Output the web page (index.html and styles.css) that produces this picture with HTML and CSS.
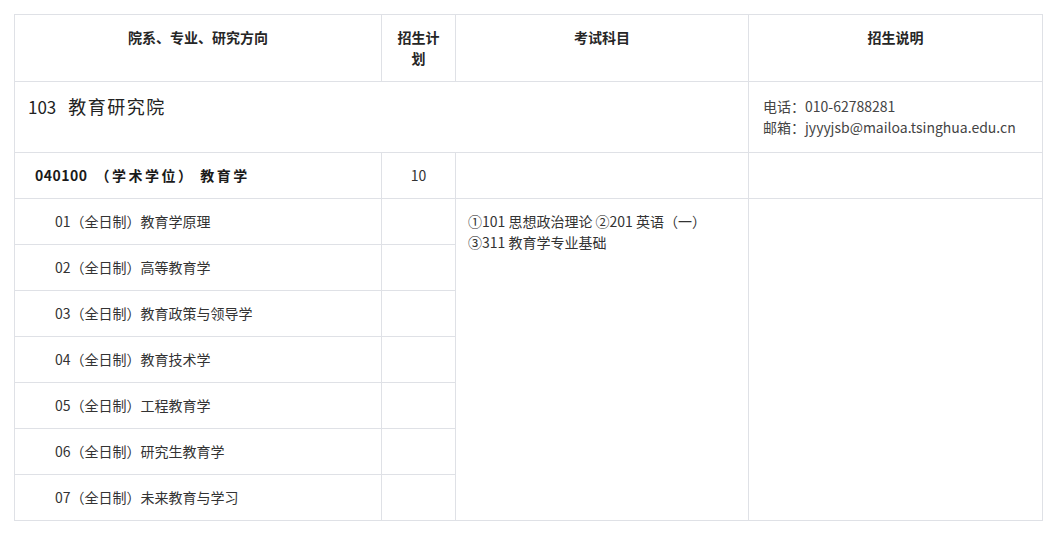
FILE: index.html
```html
<!DOCTYPE html>
<html lang="zh-CN">
<head>
<meta charset="utf-8">
<title>招生目录</title>
<link rel="stylesheet" href="styles.css">
</head>
<body>
<div class="page">
<table class="catalog">
  <colgroup>
    <col class="c1"><col class="c2"><col class="c3"><col class="c4">
  </colgroup>
  <thead>
    <tr class="head-row">
      <th>院系、专业、研究方向</th>
      <th>招生计划</th>
      <th>考试科目</th>
      <th>招生说明</th>
    </tr>
  </thead>
  <tbody>
    <tr class="dept-row">
      <td colspan="3" class="dept-name"><span class="num">103</span>教育研究院</td>
      <td class="contact">电话：010-62788281<br>邮箱：jyyyjsb@mailoa.tsinghua.edu.cn</td>
    </tr>
    <tr class="major-row">
      <td class="major-name"><span class="code">040100</span>（学术学位） 教育学</td>
      <td class="plan">10</td>
      <td></td>
      <td></td>
    </tr>
    <tr class="dir-row">
      <td class="dir">01（全日制）教育学原理</td>
      <td></td>
      <td rowspan="7" class="exam">①101 思想政治理论 ②201 英语（一）<br>③311 教育学专业基础</td>
      <td rowspan="7"></td>
    </tr>
    <tr class="dir-row"><td class="dir">02（全日制）高等教育学</td><td></td></tr>
    <tr class="dir-row"><td class="dir">03（全日制）教育政策与领导学</td><td></td></tr>
    <tr class="dir-row"><td class="dir">04（全日制）教育技术学</td><td></td></tr>
    <tr class="dir-row"><td class="dir">05（全日制）工程教育学</td><td></td></tr>
    <tr class="dir-row"><td class="dir">06（全日制）研究生教育学</td><td></td></tr>
    <tr class="dir-row"><td class="dir">07（全日制）未来教育与学习</td><td></td></tr>
  </tbody>
</table>
</div>
</body>
</html>
```
FILE: styles.css
```css
html, body {
  margin: 0;
  padding: 0;
  background: #ffffff;
}
.page {
  padding: 14px;
  font-family: "Noto Sans CJK SC", "Noto Sans", sans-serif;
  font-size: 14px;
  color: #333333;
}
.catalog {
  border-collapse: collapse;
  table-layout: fixed;
  width: 1028px;
}
.c1 { width: 367px; }
.c2 { width: 74px; }
.c3 { width: 293px; }
.c4 { width: 294px; }
.catalog th,
.catalog td {
  border: 1px solid #dfe1e6;
  padding: 0 15px;
  line-height: 21px;
  vertical-align: middle;
}
.head-row th {
  height: 66px;
  box-sizing: border-box;
  padding: 12px 15px;
  vertical-align: top;
  font-weight: bold;
  color: #262626;
  text-align: center;
}
.dept-row td {
  height: 70px;
  box-sizing: border-box;
  padding: 14px 14px;
  vertical-align: top;
}
.dept-name {
  font-size: 18px;
  letter-spacing: 1.5px;
  color: #222222;
  padding-top: 12px !important;
  padding-left: 13px !important;
  line-height: 24px !important;
}
.dept-name .num {
  letter-spacing: 0;
  margin-right: 12px;
  font-size: 17px;
}
.contact {
  color: #444444;
}
.major-row td {
  height: 46px;
  box-sizing: border-box;
}
.major-name {
  padding-left: 20px !important;
  font-weight: bold;
  font-size: 14px;
  letter-spacing: 2.5px;
  color: #1a1a1a;
}
.major-name .code {
  letter-spacing: 0.5px;
  margin-right: 8px;
}
.plan {
  text-align: center;
}
.dir-row td {
  height: 46px;
  box-sizing: border-box;
}
.dir {
  padding-left: 40px !important;
}
.exam {
  vertical-align: top !important;
  padding: 12px 12px !important;
}
```
